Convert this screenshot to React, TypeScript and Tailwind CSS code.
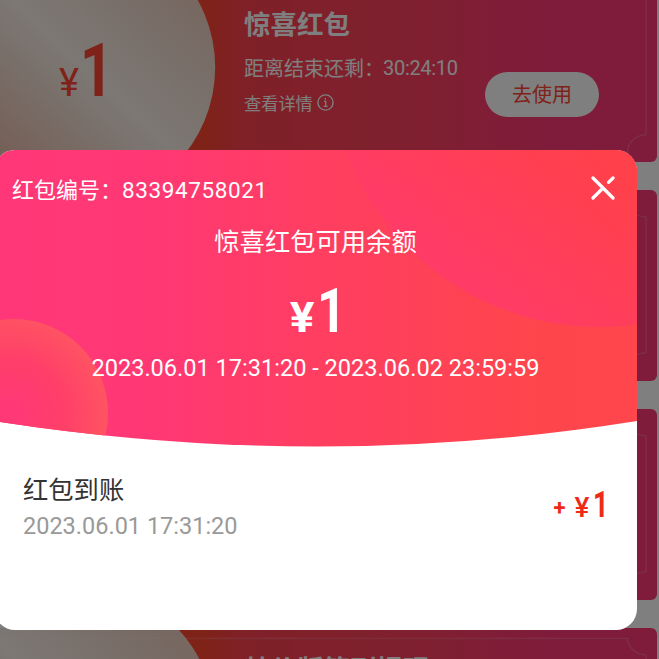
import React from "react";

type Coupon = {
  title: string;
  countdown: string;
  bodyClass: string;
};

const coupons: Coupon[] = [
  { title: "惊喜红包", countdown: "30:24:10", bodyClass: "pt-[33px]" },
  { title: "惊喜红包", countdown: "30:24:10", bodyClass: "pt-[33px]" },
  { title: "惊喜红包", countdown: "30:24:10", bodyClass: "pt-[33px]" },
  { title: "特价版签到提现", countdown: "30:24:10", bodyClass: "pt-[22px]" },
];

const InfoIcon = () => (
  <svg className="h-[17px] w-[17px]" viewBox="0 0 17 17" fill="none" stroke="#fff">
    <circle cx="8.5" cy="8.5" r="7.6" strokeWidth="1.4" />
    <path d="M7 7.3h1.7v5M6.6 12.4h4M8.3 4v1.7" strokeWidth="1.3" />
  </svg>
);

const CloseIcon = () => (
  <svg
    className="h-[24px] w-[24px]"
    viewBox="0 0 24 24"
    stroke="#fff"
    strokeWidth="3.2"
    strokeLinecap="round"
  >
    <path d="M2 2l20 20M2 22l9-9M17.6 6.400L22 2" />
  </svg>
);

const CouponShape = () => (
  <svg className="absolute inset-0 h-full w-full" viewBox="0 0 657 191" fill="none">
    <defs>
      <linearGradient
        id="coin"
        gradientUnits="userSpaceOnUse"
        x1="172"
        y1="8"
        x2="2"
        y2="190"
      >
        <stop offset="0" stopColor="#eed0c2" />
        <stop offset="0.5" stopColor="#f8f0e8" />
        <stop offset="1" stopColor="#eabeac" />
      </linearGradient>
    </defs>
    <circle cx="76" cy="95.500" r="139" fill="url(#coin)" />
    <path
      d="M0 10.500H628A19 17 0 0 0 646.500 27V163A19 17 0 0 0 628 180.500H0"
      stroke="#fff"
      strokeOpacity="0.16"
      strokeWidth="1.600"
    />
  </svg>
);

const CouponCard = ({ title, countdown, bodyClass }: Coupon) => (
  <div className="relative flex h-[190.700px] w-[657px] shrink-0 overflow-hidden rounded-r-[6px] bg-[linear-gradient(90deg,#ff4430_206px,#ff424e_238px,#ff3f62_430px,#ff3878_560px)]">
    <CouponShape />
    <div className="relative flex w-[244px] items-baseline pl-[59px] pt-[64px] font-[Roboto,sans-serif] leading-[70px] text-[#ff4434]">
      <span className="text-[38px]">¥</span>
      <span className="ml-[1px] origin-left scale-x-[0.78] text-[74px] font-bold">1</span>
    </div>
    <div className={`relative w-[240px] text-white ${bodyClass}`}>
      <div className="text-[26.500px] font-bold leading-[36px]">{title}</div>
      <div className="mt-[11px] flex text-[20px] leading-[32px]">
        距离结束还剩：
        <span className="-ml-[1px] font-[Roboto,sans-serif] tracking-[-0.300px]">{countdown}</span>
      </div>
      <div className="mt-[6px] flex items-center gap-[4px] text-[17.200px] leading-[26px]">
        查看详情
        <InfoIcon />
      </div>
    </div>
    <div className="relative ml-[1px] mt-[100px] flex h-[45px] w-[114px] items-center justify-center rounded-full bg-white text-[20px] text-[#ff4434]">
      去使用
    </div>
  </div>
);

const HeaderShape = () => (
  <svg className="absolute inset-0" width="643" height="297" viewBox="-6 150 643 297">
    <defs>
      <linearGradient id="head" x1="0" y1="0" x2="1" y2="0">
        <stop offset="0" stopColor="#ff3779" />
        <stop offset="0.250" stopColor="#ff3874" />
        <stop offset="0.500" stopColor="#ff3e61" />
        <stop offset="0.850" stopColor="#ff454c" />
        <stop offset="1" stopColor="#ff464c" />
      </linearGradient>
      <linearGradient
        id="disc"
        gradientUnits="userSpaceOnUse"
        x1="420"
        y1="330"
        x2="600"
        y2="130"
      >
        <stop offset="0" stopColor="#ff3a6c" />
        <stop offset="0.300" stopColor="#ff3c64" />
        <stop offset="0.850" stopColor="#ff404d" />
        <stop offset="1" stopColor="#ff414a" />
      </linearGradient>
      <radialGradient id="ball" gradientUnits="userSpaceOnUse" cx="10" cy="413" r="98">
        <stop offset="0" stopColor="#ff3779" />
        <stop offset="0.550" stopColor="#ff3f69" />
        <stop offset="1" stopColor="#ff5462" />
      </radialGradient>
      <clipPath id="curve">
        <path d="M-6 150H637V421Q478 446.500 318 446.500T-6 421Z" />
      </clipPath>
    </defs>
    <g clipPath="url(#curve)">
      <rect x="-6" y="150" width="643" height="297" fill="url(#head)" />
      <circle cx="600" cy="55" r="272" fill="url(#disc)" />
      <circle cx="14" cy="413" r="94" fill="url(#ball)" />
    </g>
  </svg>
);

const Dialog = () => (
  <div className="relative mt-[150px] -ml-[6px] h-[479.500px] w-[643px] overflow-hidden rounded-[21px] bg-white">
    <HeaderShape />
    <div className="relative flex h-[297px] flex-col text-white">
      <div className="flex items-center justify-between pl-[18px] pr-[22.500px] pt-[19px]">
        <div className="flex items-center text-[22px] leading-[34px]">
          红包编号：
          <span className="pt-[4px] font-[Roboto,sans-serif] text-[22.500px] tracking-[0.600px]">
            83394758021
          </span>
        </div>
        <CloseIcon />
      </div>
      <div className="mt-[15px] text-center text-[25.300px] leading-[36px]">
        惊喜红包可用余额
      </div>
      <div className="mt-[24px] flex h-[58px] items-baseline justify-center pl-[14px] font-[Roboto,sans-serif] font-bold leading-[58px]">
        <span className="origin-right scale-x-[1.1] text-[42px]">¥</span>
        <span className="ml-[2px] origin-left scale-x-[0.82] text-[62px]">1</span>
      </div>
      <div className="mt-[11px] text-center font-[Roboto,sans-serif] text-[23.550px] leading-[34px]">
        2023.06.01 17:31:20 - 2023.06.02 23:59:59
      </div>
    </div>
    <div className="relative flex items-center justify-between pl-[29px] pr-[23px] pt-[23px]">
      <div>
        <div className="text-[25.300px] leading-[36px] text-[#333]">红包到账</div>
        <div className="pt-[2px] font-[Roboto,sans-serif] text-[23.500px] leading-[37px] text-[#999]">
          2023.06.01 17:31:20
        </div>
      </div>
      <div className="flex items-baseline font-[Roboto,sans-serif] leading-[36px] text-[#ee2a18]">
        <span className="mr-[9px] -translate-y-[2px] text-[22px] font-bold">+</span>
        <span className="text-[28px] font-medium">¥</span>
        <span className="ml-[4px] origin-left scale-x-[0.75] text-[36px] font-bold">1</span>
      </div>
    </div>
  </div>
);

const App = () => {
  return (
    <div className="relative h-[659px] w-[659px] overflow-hidden bg-white font-['Noto_Sans_CJK_SC',sans-serif]">
      <div className="-mt-[28.500px] flex flex-col gap-[28px]">
        {coupons.map((item, index) => (
          <CouponCard key={index} {...item} />
        ))}
      </div>
      <div className="absolute inset-0 bg-black/50">
        <Dialog />
      </div>
    </div>
  );
};

export default App;
